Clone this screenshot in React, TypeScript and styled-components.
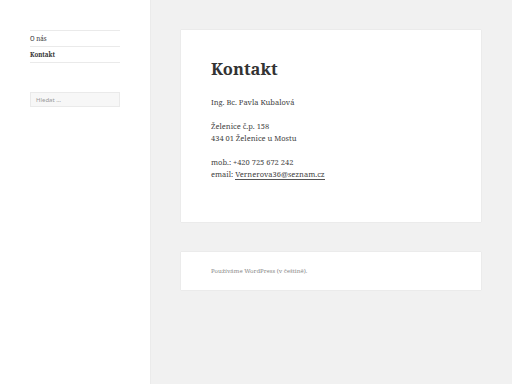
import React from "react";
import styled, { createGlobalStyle } from "styled-components";

const Global = createGlobalStyle`
  html, body { margin: 0; padding: 0; }
  body {
    background: #f1f1f1;
    font-family: "Noto Serif", "DejaVu Serif", serif;
    color: #333;
  }
`;

const Page = styled.div`
  display: flex;
  min-height: 384px;
`;

const Sidebar = styled.aside`
  width: 150px;
  flex: none;
  background: #fff;
  box-shadow: 0 0 1px rgba(0, 0, 0, 0.15);
  padding: 30px 30px 0;
  box-sizing: border-box;
`;

const Nav = styled.ul`
  list-style: none;
  margin: 0;
  padding: 0;
  border-top: 1px solid #eaeaea;
`;

const NavItem = styled.li<{ $current?: boolean }>`
  border-bottom: 1px solid #eaeaea;
  height: 15px;
  display: flex;
  align-items: center;
  font-size: 6.2px;
  font-weight: ${(p) => (p.$current ? 700 : 400)};
  color: #333;
`;

const Search = styled.div`
  margin-top: 29px;
  height: 15px;
  box-sizing: border-box;
  border: 1px solid #eaeaea;
  background: #f7f7f7;
  display: flex;
  align-items: center;
  padding-left: 5px;
  font-family: "Noto Sans", sans-serif;
  font-size: 6px;
  color: #999;
`;

const Main = styled.main`
  display: flex;
  flex-direction: column;
  gap: 30px;
  padding: 30px 0 0 31px;
`;

const Card = styled.section<{ $h: number }>`
  width: 300px;
  height: ${(p) => p.$h}px;
  box-sizing: border-box;
  background: #fff;
  box-shadow: 0 0 1px rgba(0, 0, 0, 0.15);
  padding: 0 30px;
`;

const Title = styled.h1`
  margin: 0;
  padding-top: 28px;
  font-size: 16.5px;
  line-height: 22px;
  font-weight: 700;
  color: #333;
`;

const Para = styled.p`
  margin: 0;
  font-size: 7.5px;
  line-height: 12px;
  color: #444;
  & + & { margin-top: 12px; }
`;

const Content = styled.div`
  padding-top: 16px;
`;

const Mail = styled.a`
  color: #444;
  text-decoration: none;
  border-bottom: 1px solid #555;
`;

const Footer = styled.div`
  padding-top: 14px;
  font-size: 6px;
  line-height: 10px;
  color: #8a8a8a;
`;

export default function App() {
  return (
    <>
      <Global />
      <Page>
        <Sidebar>
          <Nav>
            <NavItem>O nás</NavItem>
            <NavItem $current>Kontakt</NavItem>
          </Nav>
          <Search>Hledat …</Search>
        </Sidebar>
        <Main>
          <Card $h={192}>
            <Title>Kontakt</Title>
            <Content>
              <Para>Ing. Bc. Pavla Kubalová</Para>
              <Para>
                Želenice č.p. 158
                <br />
                434 01 Želenice u Mostu
              </Para>
              <Para>
                mob.: +420 725 672 242
                <br />
                email: <Mail>Vernerova36@seznam.cz</Mail>
              </Para>
            </Content>
          </Card>
          <Card $h={38}>
            <Footer>Používáme WordPress (v češtině).</Footer>
          </Card>
        </Main>
      </Page>
    </>
  );
}
